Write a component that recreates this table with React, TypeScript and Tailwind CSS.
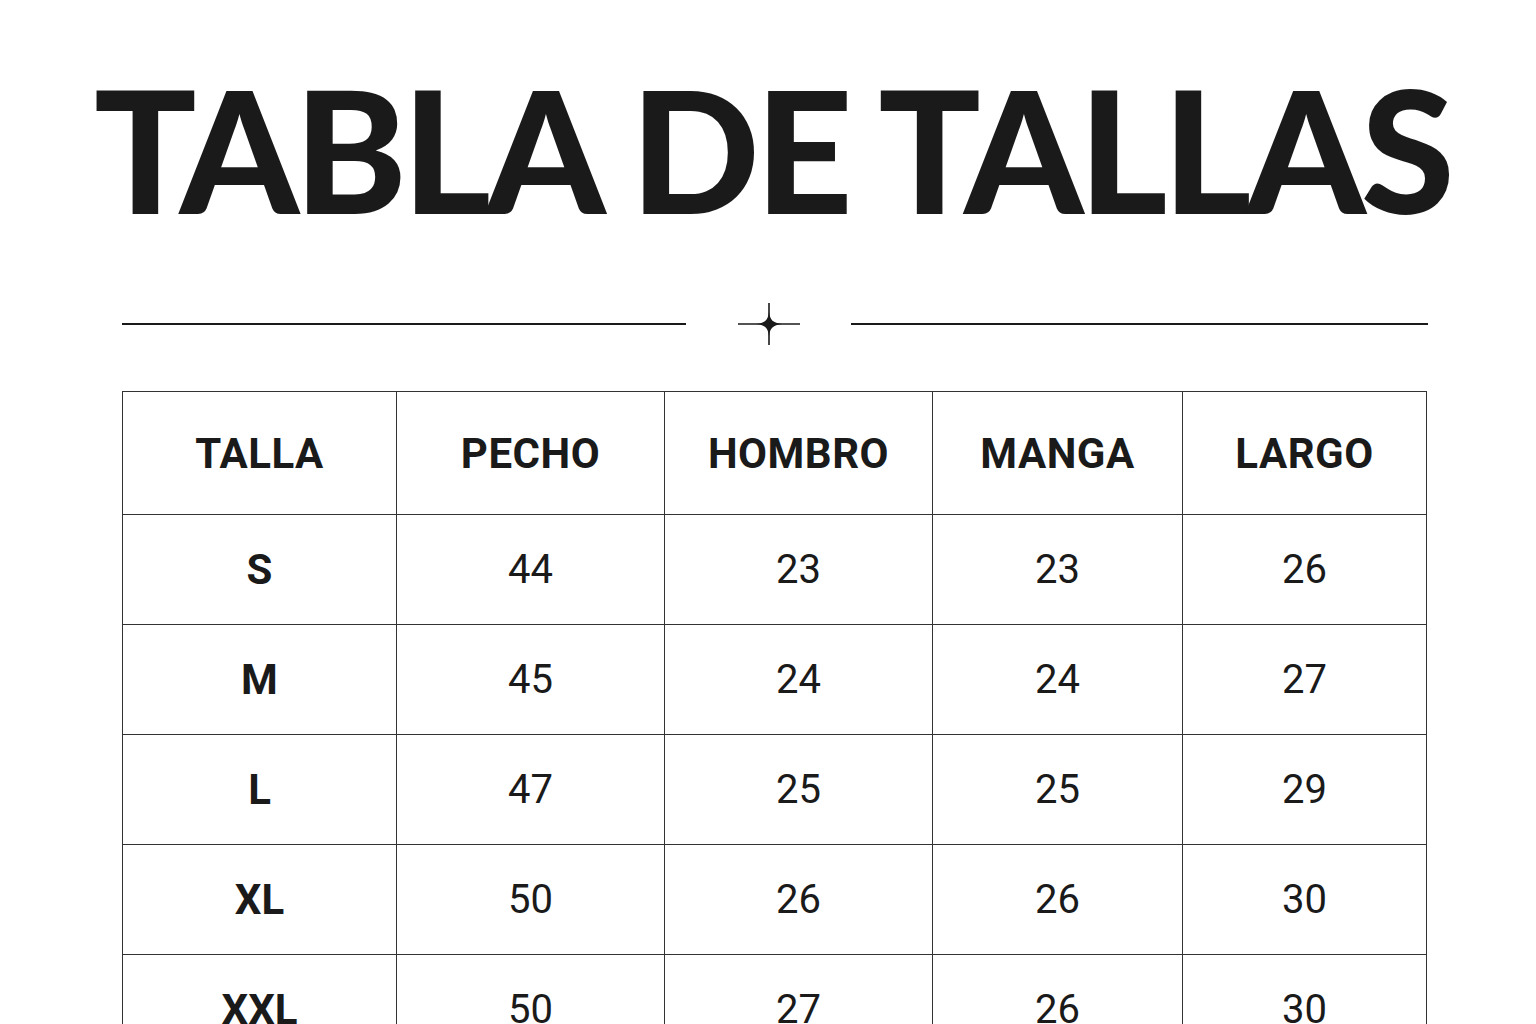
import React from 'react';

const headers = ['TALLA', 'PECHO', 'HOMBRO', 'MANGA', 'LARGO'];

const rows = [
  ['S', '44', '23', '23', '26'],
  ['M', '45', '24', '24', '27'],
  ['L', '47', '25', '25', '29'],
  ['XL', '50', '26', '26', '30'],
  ['XXL', '50', '27', '26', '30'],
];

const colWidths = ['w-[274px]', 'w-[268px]', 'w-[268px]', 'w-[250px]', 'w-[244px]'];

function Sparkle() {
  return (
    <svg width="64" height="44" viewBox="0 0 64 44" className="block">
      <line x1="1" y1="22" x2="63" y2="22" stroke="#1a1a1a" strokeWidth="1.6" />
      <line x1="32" y1="1" x2="32" y2="43" stroke="#1a1a1a" strokeWidth="1.6" />
      <path
        d="M32 10 C33 18 36 21 45 22 C36 23 33 26 32 34 C31 26 28 23 19 22 C28 21 31 18 32 10 Z"
        fill="#1a1a1a"
      />
    </svg>
  );
}

export default function App() {
  return (
    <div className="min-h-[1024px] w-full bg-white overflow-hidden text-[#1a1a1a]">
      {/* Title */}
      <div className="flex justify-center pt-[63px] pl-[8px]">
        <h1 className="font-['Lato','Liberation_Sans',sans-serif] font-black text-[170px] leading-none tracking-[-4.8px] whitespace-nowrap">
          TABLA DE TALLAS
        </h1>
      </div>

      <div className="pl-[122px]">
        {/* Divider */}
        <div className="mt-[69px] flex w-[1306px] items-center">
          <div className="h-[1.5px] w-[564px] bg-[#1a1a1a]" />
          <div className="flex flex-1 justify-center">
            <Sparkle />
          </div>
          <div className="h-[1.5px] w-[577px] bg-[#1a1a1a]" />
        </div>

        {/* Size table */}
        <table className="mt-[45px] border-collapse font-['Roboto','Liberation_Sans',sans-serif]">
          <thead>
            <tr className="h-[123px]">
              {headers.map((h, i) => (
                <th
                  key={h}
                  className={`${colWidths[i]} border-[1.5px] border-[#333] text-center align-middle text-[42px] font-bold tracking-[0.5px]`}
                >
                  {h}
                </th>
              ))}
            </tr>
          </thead>
          <tbody>
            {rows.map((row) => (
              <tr key={row[0]} className="h-[110px]">
                {row.map((cell, i) => (
                  <td
                    key={i}
                    className={`border-[1.5px] border-[#333] text-center align-middle ${i === 0 ? 'text-[42px] font-bold' : 'text-[40px] font-normal'}`}
                  >
                    {cell}
                  </td>
                ))}
              </tr>
            ))}
          </tbody>
        </table>
      </div>
    </div>
  );
}
